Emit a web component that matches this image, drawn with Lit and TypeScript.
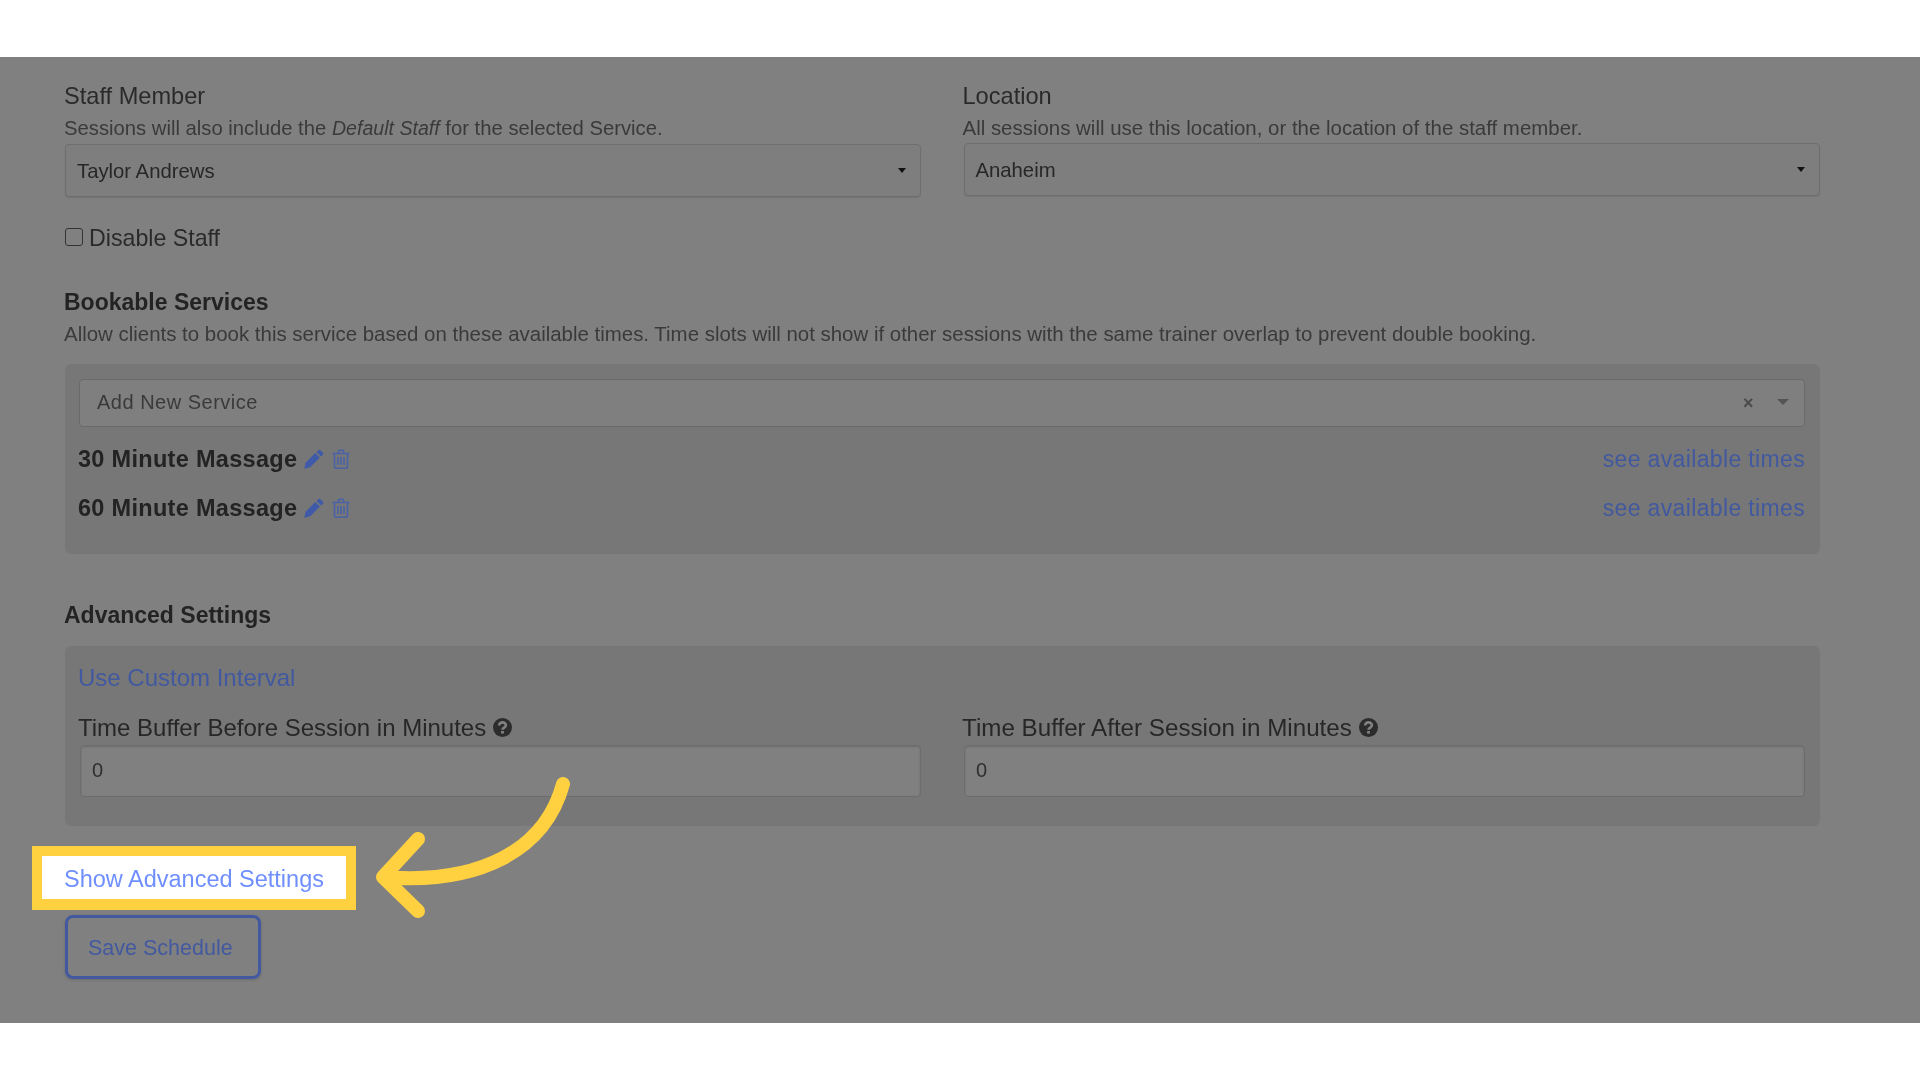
import { LitElement, html, css, svg } from "lit";
import { customElement } from "lit/decorators.js";

const pencil = html`<svg class="ico" width="20" height="20" viewBox="0 0 20 20"><path fill="#3f5aa8" d="M14.2 1.2a1.6 1.6 0 0 1 2.2 0l2.4 2.4a1.6 1.6 0 0 1 0 2.2l-1.7 1.7-4.6-4.6zM11.3 4 15.9 8.6 6.2 18.3 0.3 19.8 1.6 13.7z"/></svg>`;
const trash = html`<svg class="ico" width="18" height="20" viewBox="0 0 18 20"><path fill="none" stroke="#4a62a6" stroke-width="1.6" d="M0.5 4.5h17M6 4.2 7 1.2h4l1 3M2.5 4.5v12.8q0 1.9 1.9 1.9h9.2q1.9 0 1.9-1.9V4.5"/><path fill="none" stroke="#4a62a6" stroke-width="1.6" d="M6 8v8M9 8v8M12 8v8"/></svg>`;
const help = html`<svg class="help" width="19" height="19" viewBox="0 0 19 19"><circle cx="9.5" cy="9.5" r="9.5" fill="#2c2c2c"/><path fill="none" stroke="#808080" stroke-width="2.6" d="M6.1 7.4c0-1.9 1.4-3 3.4-3s3.4 1.1 3.4 2.8c0 2.4-3.4 2.3-3.4 4.6"/><rect x="8.1" y="13" width="2.8" height="2.6" fill="#808080"/></svg>`;
const arrow = svg`<path d="M563 784C545 850 480 885 383 877M418 839L383 877L418 911" fill="none" stroke="#ffd040" stroke-width="14" stroke-linecap="round" stroke-linejoin="round"/>`;

@customElement("app-root")
export class AppRoot extends LitElement {
  static styles = css`
    :host { display: block; width: 1920px; height: 1080px; background: #fff; position: relative; overflow: hidden;
      font-family: "Liberation Sans", Arial, sans-serif; color: #2a2a2a; }
    .band { position: absolute; left: 0; top: 57px; width: 1920px; height: 966px; background: #808080; box-sizing: border-box; padding: 26px 100px 0 64px; }
    .soft { filter: blur(0.5px); }
    .two { display: grid; grid-template-columns: 857px 857px; column-gap: 41.5px; }
    .label { font-size: 23.6px; line-height: 26px; }
    .desc { font-size: 20.45px; line-height: 24px; margin-top: 7px; color: #3a3a3a; }
    .desc.tight { font-size: 20.25px; }
    .desc i { font-style: italic; font-size: 19.6px; }
    .sel { box-sizing: border-box; border: 1px solid #6e6e6e; border-radius: 4px; background: #7e7e7e; display: flex; align-items: center; justify-content: space-between;
      padding: 2px 14px 0 11px; font-size: 20.3px; color: #272727; box-shadow: 0 1px 1px #747474; }
    .a { margin-left: 1px; margin-top: 4px; height: 53px; }
    .b { margin-left: 1px; margin-top: 3px; height: 53px; }
    .caret { width: 0; height: 0; border: 4px solid transparent; border-top: 5px solid #111; border-bottom: 0; margin-top: -2px; }
    .check { display: flex; align-items: center; gap: 6px; margin-top: 27.5px; font-size: 23.2px; line-height: 26px; height: 26px; }
    .box { width: 18px; height: 18px; box-sizing: border-box; border: 1.5px solid #333; border-radius: 3px; margin: -1px 0 0 1px; }
    h3 { margin: 0; font-size: 23px; line-height: 26px; font-weight: 700; color: #232323; }
    .h1 { margin-top: 38px; }
    .panel { background: #777; border-radius: 6px; margin-left: 1px; width: 1755px; box-sizing: border-box; }
    .p1 { height: 190px; margin-top: 18px; padding: 15px 15px 0 14px; }
    .add { height: 48px; box-sizing: border-box; background: #7f7f7f; border: 1px solid #6a6a6a; border-radius: 4px; display: flex; align-items: center; padding: 0 15px 1px 17px; color: #3a3a3a; font-size: 20px; letter-spacing: .5px; }
    .add .sp { flex: 1; }
    .x { font-size: 18px; font-weight: 700; color: #4a4a4a; line-height: 1; margin-right: 23px; margin-top: 2px; }
    .caret2 { width: 0; height: 0; border: 6px solid transparent; border-top: 6px solid #555; border-bottom: 0; margin-top: -1px; }
    .svc { display: flex; align-items: center; height: 49px; font-size: 23.5px; }
    .svc b { color: #232323; letter-spacing: .3px; margin-right: 7px; }
    .ico { margin-right: 8px; flex: none; margin-top: -1px; }
    .svc .sp { flex: 1; }
    .svc a { color: #42599f; letter-spacing: .35px; font-size: 23px; }
    .rows { margin-left: -1px; margin-top: 8px; }
    .h2 { margin-top: 48px; }
    .p2 { height: 180px; margin-top: 18px; padding: 19px 15px 0 14px; }
    .link { color: #42599f; font-size: 24px; line-height: 26px; margin-left: -1px; }
    .fields { display: grid; grid-template-columns: 842px 842px; column-gap: 42px; margin-top: 24px; }
    .flabel { display: flex; align-items: center; gap: 7px; font-size: 24px; line-height: 26px; color: #272727; margin-left: -1px; }
    .flabel.wide { font-size: 24.2px; }
    .input { box-sizing: border-box; height: 52px; margin: 4px 0 0 1px; border: 1px solid #6d6d6d; border-radius: 4px; background: #808080; display: flex; align-items: center; padding-left: 11px; font-size: 20px; color: #2f2f2f; box-shadow: inset 0 1px 2px #6c6c6c; }
    .save { margin: 89px 0 0 1px; width: 196px; height: 64px; box-sizing: border-box; border: 3px solid #42599f; border-radius: 8px; display: flex; align-items: center; padding: 4px 0 0 20px; color: #42599f; font-size: 21.5px; box-shadow: 0 1px 3px #6a6a6a; }
    .hl { position: absolute; left: 32px; top: 846px; width: 324px; height: 64px; box-sizing: border-box; border: 10px solid #ffd040; border-bottom-width: 11px; background: #fff; color: #6f8fff; font-size: 23.5px; display: flex; align-items: center; padding: 4px 0 0 22px; }
    .hl span { filter: blur(0.4px); }
    .arrow { position: absolute; left: 0; top: 0; pointer-events: none; }
  `;

  render() {
    return html`
      <div class="band">
        <div class="soft">
          <div class="two">
            <div>
              <div class="label">Staff Member</div>
              <div class="desc tight">Sessions will also include the <i>Default Staff</i> for the selected Service.</div>
              <div class="sel a"><span>Taylor Andrews</span><span class="caret"></span></div>
            </div>
            <div>
              <div class="label">Location</div>
              <div class="desc">All sessions will use this location, or the location of the staff member.</div>
              <div class="sel b"><span>Anaheim</span><span class="caret"></span></div>
            </div>
          </div>
          <div class="check"><span class="box"></span><span>Disable Staff</span></div>
          <h3 class="h1">Bookable Services</h3>
          <div class="desc">Allow clients to book this service based on these available times. Time slots will not show if other sessions with the same trainer overlap to prevent double booking.</div>
          <div class="panel p1">
            <div class="add"><span>Add New Service</span><span class="sp"></span><span class="x">×</span><span class="caret2"></span></div>
            <div class="rows">
              <div class="svc"><b>30 Minute Massage</b>${pencil}${trash}<span class="sp"></span><a>see available times</a></div>
              <div class="svc"><b>60 Minute Massage</b>${pencil}${trash}<span class="sp"></span><a>see available times</a></div>
            </div>
          </div>
          <h3 class="h2">Advanced Settings</h3>
          <div class="panel p2">
            <div class="link">Use Custom Interval</div>
            <div class="fields">
              <div><div class="flabel">Time Buffer Before Session in Minutes ${help}</div><div class="input">0</div></div>
              <div><div class="flabel wide">Time Buffer After Session in Minutes ${help}</div><div class="input">0</div></div>
            </div>
          </div>
          <div class="save">Save Schedule</div>
        </div>
      </div>
      <div class="hl"><span>Show Advanced Settings</span></div>
      <svg class="arrow" width="1920" height="1080" viewBox="0 0 1920 1080">${arrow}</svg>
    `;
  }
}
